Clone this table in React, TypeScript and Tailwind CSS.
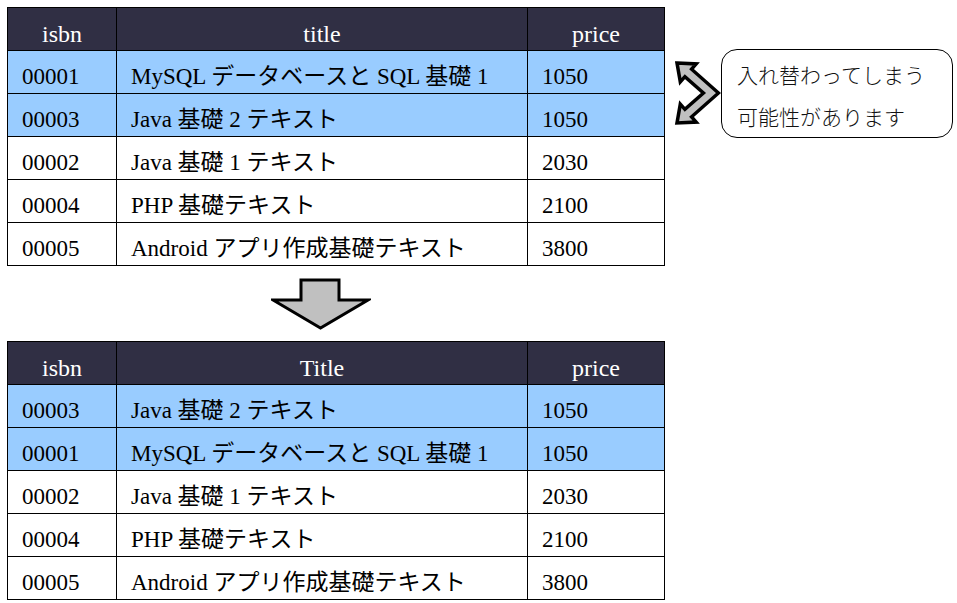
import React from "react"

interface Book {
  isbn: string
  title: string
  price: string
  hl?: boolean
}

const before: Book[] = [
  { isbn: "00001", title: "MySQL データベースと SQL 基礎 1", price: "1050", hl: true },
  { isbn: "00003", title: "Java 基礎 2 テキスト", price: "1050", hl: true },
  { isbn: "00002", title: "Java 基礎 1 テキスト", price: "2030" },
  { isbn: "00004", title: "PHP 基礎テキスト", price: "2100" },
  { isbn: "00005", title: "Android アプリ作成基礎テキスト", price: "3800" },
]

const after: Book[] = [
  { isbn: "00003", title: "Java 基礎 2 テキスト", price: "1050", hl: true },
  { isbn: "00001", title: "MySQL データベースと SQL 基礎 1", price: "1050", hl: true },
  { isbn: "00002", title: "Java 基礎 1 テキスト", price: "2030" },
  { isbn: "00004", title: "PHP 基礎テキスト", price: "2100" },
  { isbn: "00005", title: "Android アプリ作成基礎テキスト", price: "3800" },
]

function BookTable({ rows, titleLabel }: { rows: Book[]; titleLabel: string }) {
  const head =
    "h-[43px] border-r border-b border-black bg-[#302f44] text-white text-[24px] flex items-end justify-center pb-[4px]"
  return (
    <div className="w-[658px] grid grid-cols-[109px_411px_137px] border-l border-t border-black">
      {/* ヘッダー */}
      <div className={head}>isbn</div>
      <div className={head}>{titleLabel}</div>
      <div className={head}>price</div>
      {rows.map((r) => {
        const cell =
          "h-[43px] border-r border-b border-black flex items-end pl-[14px] pb-[5px] whitespace-nowrap " +
          (r.hl ? "bg-[#99ccff]" : "bg-white")
        return (
          <React.Fragment key={r.isbn}>
            <div className={cell}>{r.isbn}</div>
            <div className={cell}>{r.title}</div>
            <div className={cell}>{r.price}</div>
          </React.Fragment>
        )
      })}
    </div>
  )
}

export default function App() {
  return (
    <div className="w-[957px] h-[603px] bg-white text-black text-[23px] leading-none font-['Liberation_Serif','Noto_Sans_CJK_JP',serif]">
      {/* 上の表と吹き出し */}
      <div className="flex items-start pt-[7px] pl-[7px]">
        <BookTable rows={before} titleLabel="title" />
        <svg className="mt-[52px] ml-[8px] shrink-0" width="48" height="70" viewBox="0 0 48 70">
          <polygon
            points="4,4 23.2,4.9 18.6,10.2 45.5,34 18.6,57.8 23.2,63.1 4,64 7.3,45.1 11.9,50.3 30.4,34 11.9,17.7 7.3,22.9"
            fill="#c0c0c0"
            stroke="#000"
            strokeWidth="3.5"
            strokeLinejoin="miter"
          />
        </svg>
        <div className="mt-[42px] w-[232px] h-[89px] shrink-0 border border-black rounded-[16px] pl-[15px] pt-[14px] font-['Noto_Sans_CJK_JP',sans-serif] font-light text-[21px] text-[#111] flex flex-col gap-[21px]">
          <span>入れ替わってしまう</span>
          <span>可能性があります</span>
        </div>
      </div>

      {/* 下向き矢印 */}
      <div className="h-[75px] pl-[271px] pt-[12px]">
        <svg width="100" height="54" viewBox="271 277 100 54">
          <polygon
            points="301,279 339,279 339,299 368,299 320.5,327 273,299 301,299"
            fill="#c0c0c0"
            stroke="#000"
            strokeWidth="3"
          />
        </svg>
      </div>

      {/* 下の表 */}
      <div className="pl-[7px]">
        <BookTable rows={after} titleLabel="Title" />
      </div>
    </div>
  )
}
